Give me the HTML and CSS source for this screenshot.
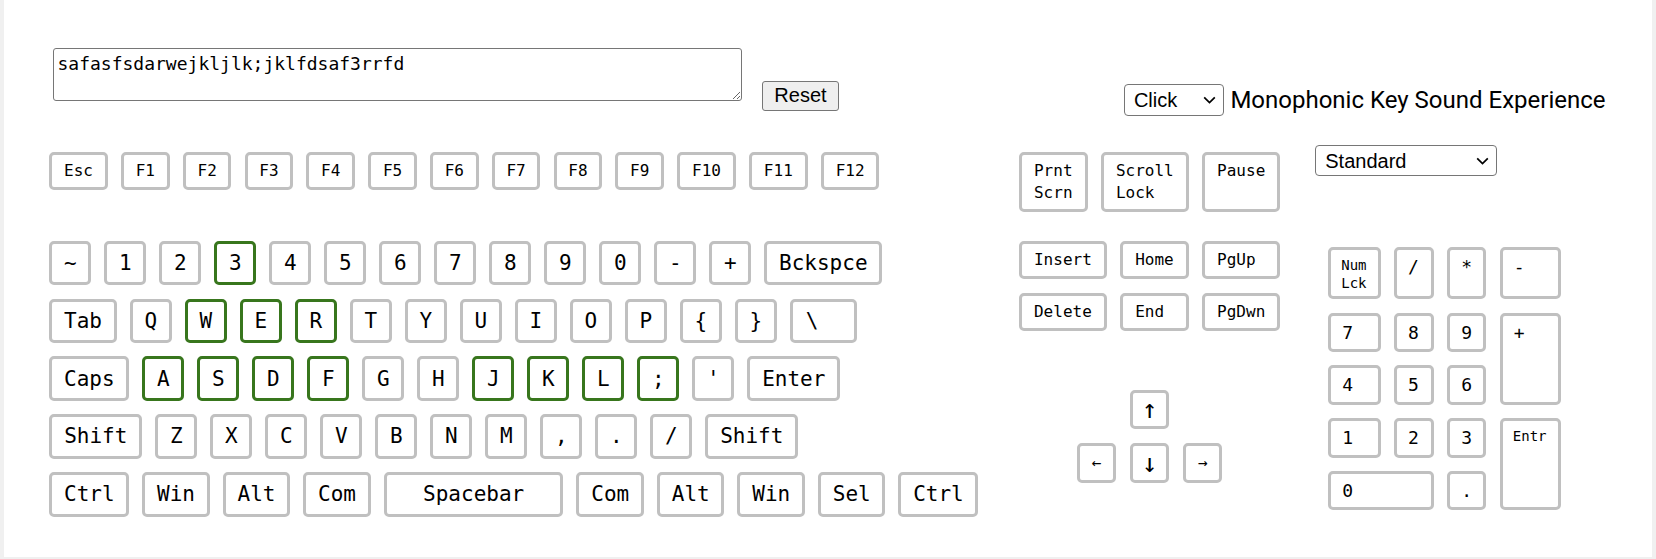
FILE: index.html
```html
<!DOCTYPE html>
<html lang="en">
<head>
<meta charset="utf-8">
<title>Keyboard</title>
<link rel="stylesheet" href="styles.css">
</head>
<body>
<div class="page">
  <div class="top">
    <textarea class="typed">safasfsdarwejkljlk;jklfdsaf3rrfd</textarea>
    <button class="reset">Reset</button>
    <div class="sound">
      <span class="selwrap sel-click">
        <select><option>Click</option></select>
        <svg viewBox="0 0 13 8"><path d="M1.2 1.3 L6.5 6.5 L11.8 1.3" fill="none" stroke="#000" stroke-width="1.7"/></svg>
      </span>
      <span class="sound-label">Monophonic Key Sound Experience</span>
    </div>
  </div>

  <div class="keyboard">
    <div class="main">
      <div class="frow">
        <div class="k fk wide">Esc</div>
        <div class="k fk">F1</div>
        <div class="k fk">F2</div>
        <div class="k fk">F3</div>
        <div class="k fk">F4</div>
        <div class="k fk">F5</div>
        <div class="k fk">F6</div>
        <div class="k fk">F7</div>
        <div class="k fk">F8</div>
        <div class="k fk">F9</div>
        <div class="k fk wide">F10</div>
        <div class="k fk wide">F11</div>
        <div class="k fk wide">F12</div>
      </div>
      <div class="rows">
        <div class="row">
          <div class="k">~</div>
          <div class="k">1</div>
          <div class="k">2</div>
          <div class="k on">3</div>
          <div class="k">4</div>
          <div class="k">5</div>
          <div class="k">6</div>
          <div class="k">7</div>
          <div class="k">8</div>
          <div class="k">9</div>
          <div class="k">0</div>
          <div class="k">-</div>
          <div class="k">+</div>
          <div class="k w7">Bckspce</div>
        </div>
        <div class="row">
          <div class="k w3">Tab</div>
          <div class="k">Q</div>
          <div class="k on">W</div>
          <div class="k on">E</div>
          <div class="k on">R</div>
          <div class="k">T</div>
          <div class="k">Y</div>
          <div class="k">U</div>
          <div class="k">I</div>
          <div class="k">O</div>
          <div class="k">P</div>
          <div class="k">{</div>
          <div class="k">}</div>
          <div class="k w3 left">\</div>
        </div>
        <div class="row">
          <div class="k w4">Caps</div>
          <div class="k on">A</div>
          <div class="k on">S</div>
          <div class="k on">D</div>
          <div class="k on">F</div>
          <div class="k">G</div>
          <div class="k">H</div>
          <div class="k on">J</div>
          <div class="k on">K</div>
          <div class="k on">L</div>
          <div class="k on">;</div>
          <div class="k">'</div>
          <div class="k w5">Enter</div>
        </div>
        <div class="row">
          <div class="k w5">Shift</div>
          <div class="k">Z</div>
          <div class="k">X</div>
          <div class="k">C</div>
          <div class="k">V</div>
          <div class="k">B</div>
          <div class="k">N</div>
          <div class="k">M</div>
          <div class="k">,</div>
          <div class="k">.</div>
          <div class="k">/</div>
          <div class="k w5">Shift</div>
        </div>
        <div class="row">
          <div class="k w4">Ctrl</div>
          <div class="k w3">Win</div>
          <div class="k w3">Alt</div>
          <div class="k w3">Com</div>
          <div class="k space">Spacebar</div>
          <div class="k w3">Com</div>
          <div class="k w3">Alt</div>
          <div class="k w3">Win</div>
          <div class="k w3">Sel</div>
          <div class="k w4">Ctrl</div>
        </div>
      </div>
    </div>

    <div class="nav">
      <div class="sys">
        <div class="k nk tall">Prnt<br>Scrn</div>
        <div class="k nk tall">Scroll<br>Lock</div>
        <div class="k nk tall">Pause</div>
      </div>
      <div class="edit">
        <div class="k nk">Insert</div>
        <div class="k nk">Home</div>
        <div class="k nk">PgUp</div>
        <div class="k nk">Delete</div>
        <div class="k nk">End</div>
        <div class="k nk">PgDwn</div>
      </div>
      <div class="arrows">
        <div class="k ak vert up">↑</div>
        <div class="k ak horiz lt">←</div>
        <div class="k ak vert dn">↓</div>
        <div class="k ak horiz rt">→</div>
      </div>
    </div>

    <div class="numsec">
      <span class="selwrap sel-layout">
        <select><option>Standard</option></select>
        <svg viewBox="0 0 13 8"><path d="M1.2 1.3 L6.5 6.5 L11.8 1.3" fill="none" stroke="#000" stroke-width="1.7"/></svg>
      </span>
      <div class="numpad">
        <div class="k pk sm">Num<br>Lck</div>
        <div class="k pk">/</div>
        <div class="k pk">*</div>
        <div class="k pk">-</div>
        <div class="k pk">7</div>
        <div class="k pk">8</div>
        <div class="k pk">9</div>
        <div class="k pk plus">+</div>
        <div class="k pk">4</div>
        <div class="k pk">5</div>
        <div class="k pk">6</div>
        <div class="k pk">1</div>
        <div class="k pk">2</div>
        <div class="k pk">3</div>
        <div class="k pk sm entr">Entr</div>
        <div class="k pk zero">0</div>
        <div class="k pk">.</div>
      </div>
    </div>
  </div>
</div>
</body>
</html>
```

FILE: styles.css
```css
* { box-sizing: border-box; }

html, body {
  margin: 0;
  padding: 0;
}

body {
  background: #f0f0f0;
  width: 1656px;
  height: 559px;
  overflow: hidden;
}

.page {
  margin-left: 4px;
  width: 1648px;
  height: 557px;
  background: #fff;
  padding-top: 48px;
  font-family: "DejaVu Sans Mono", "Liberation Mono", monospace;
  color: #000;
}

/* ---------- top bar ---------- */
.top {
  display: flex;
  align-items: flex-start;
  height: 68px;
}

.typed {
  margin: 0 0 0 48.5px;
  width: 689.8px;
  height: 53.4px;
  border: 1px solid #767676;
  border-radius: 3px;
  padding: 4px 4px;
  font: 18px/21px "DejaVu Sans Mono", "Liberation Mono", monospace;
  color: #000;
  background: #fff;
  resize: both;
  outline: none;
}

.reset {
  margin: 32.7px 0 0 20px;
  width: 76.4px;
  height: 30.6px;
  padding: 0;
  font: 20px "Liberation Sans", Arial, sans-serif;
  color: #000;
  background: #efefef;
  border: 1px solid #767676;
  border-radius: 3px;
}

.sound {
  margin: 36px 46.5px 0 auto;
  display: flex;
  align-items: center;
  gap: 6.8px;
}

.sound-label {
  font: 24px Roboto, "Liberation Sans", Arial, sans-serif;
  color: #000;
  white-space: nowrap;
}

.selwrap {
  position: relative;
  display: inline-block;
  line-height: 0;
}

.selwrap select {
  -webkit-appearance: none;
  appearance: none;
  margin: 0;
  font: 20px "Liberation Sans", Arial, sans-serif;
  color: #000;
  background: #fff;
  border: 1px solid #767676;
  border-radius: 4px;
  padding: 0 0 0 9px;
  outline: none;
}

.selwrap svg {
  position: absolute;
  right: 7.5px;
  top: 50%;
  width: 13px;
  height: 8px;
  margin-top: -4px;
  pointer-events: none;
}

.sel-click select {
  width: 99.7px;
  height: 32px;
}

.sel-layout select {
  width: 181.6px;
  height: 31px;
}

/* ---------- keyboard ---------- */
.keyboard {
  display: flex;
  align-items: flex-start;
  margin-top: 29px;
  padding-left: 45.3px;
}

.k {
  border: 3px solid #c0c0c0;
  border-radius: 5px;
  background: #fff;
  color: #000;
  display: flex;
  align-items: center;
  justify-content: center;
  white-space: nowrap;
}

.k.on {
  border-color: #38761d;
}

.main {
  margin-top: 6.7px;
  display: flex;
  flex-direction: column;
}

.frow {
  display: flex;
  gap: 13.3px;
}

.fk {
  width: 48.5px;
  height: 38.3px;
  font-size: 16px;
}

.fk.wide {
  width: 58.5px;
}

.rows {
  margin-top: 50.7px;
  display: flex;
  flex-direction: column;
  gap: 13.6px;
}

.row {
  display: flex;
  gap: 13px;
}

.row .k {
  width: 42px;
  height: 44.3px;
  font-size: 21px;
}

.row .k.w3 { width: 67.5px; }
.row .k.w4 { width: 80px; }
.row .k.w5 { width: 93px; }
.row .k.w7 { width: 118px; }
.row .k.space { width: 179.7px; }
.row .k.left { justify-content: flex-start; padding-left: 13px; }

/* nav cluster */
.nav {
  margin-left: 40.5px;
  margin-top: 6.7px;
  display: flex;
  flex-direction: column;
}

.nk {
  height: 38.3px;
  padding: 0 12px;
  font-size: 16px;
  justify-content: flex-start;
}

.sys {
  display: flex;
  gap: 13.4px;
}

.nk.tall {
  height: 60px;
  align-items: flex-start;
  padding-top: 5px;
  line-height: 22.6px;
}

.edit {
  margin-top: 29px;
  display: grid;
  grid-template-columns: auto auto auto;
  column-gap: 13.4px;
  row-gap: 13.7px;
}

.arrows {
  align-self: center;
  margin-top: 59px;
  display: grid;
  grid-template-columns: 39.5px 39.5px 39.5px;
  grid-template-rows: 39px 40px;
  column-gap: 13.6px;
  row-gap: 13.7px;
}

.ak.vert {
  font-size: 26px;
}

.ak.horiz {
  font-size: 16px;
}

.ak.up { grid-row: 1; grid-column: 2; }
.ak.lt { grid-row: 2; grid-column: 1; }
.ak.dn { grid-row: 2; grid-column: 2; }
.ak.rt { grid-row: 2; grid-column: 3; }

/* numpad */
.numsec {
  margin-left: 35px;
  display: flex;
  flex-direction: column;
  align-items: flex-start;
}

.numpad {
  margin: 70.7px 0 0 13px;
  display: grid;
  grid-template-columns: 52.3px 39.8px 39.3px 61.4px;
  grid-template-rows: 52.6px 39.5px 39.5px 39.5px 39.5px;
  column-gap: 13.4px;
  row-gap: 13.3px;
}

.pk {
  display: block;
  font-size: 18px;
  line-height: 26px;
  padding: 4px 0 0 11px;
}

.pk.sm {
  font-size: 14px;
  line-height: 18px;
  padding: 6px 0 0 10px;
}

.pk.plus {
  grid-column: 4;
  grid-row: 2 / span 2;
}

.pk.entr {
  grid-column: 4;
  grid-row: 4 / span 2;
}

.pk.zero {
  grid-column: 1 / span 2;
}
```
